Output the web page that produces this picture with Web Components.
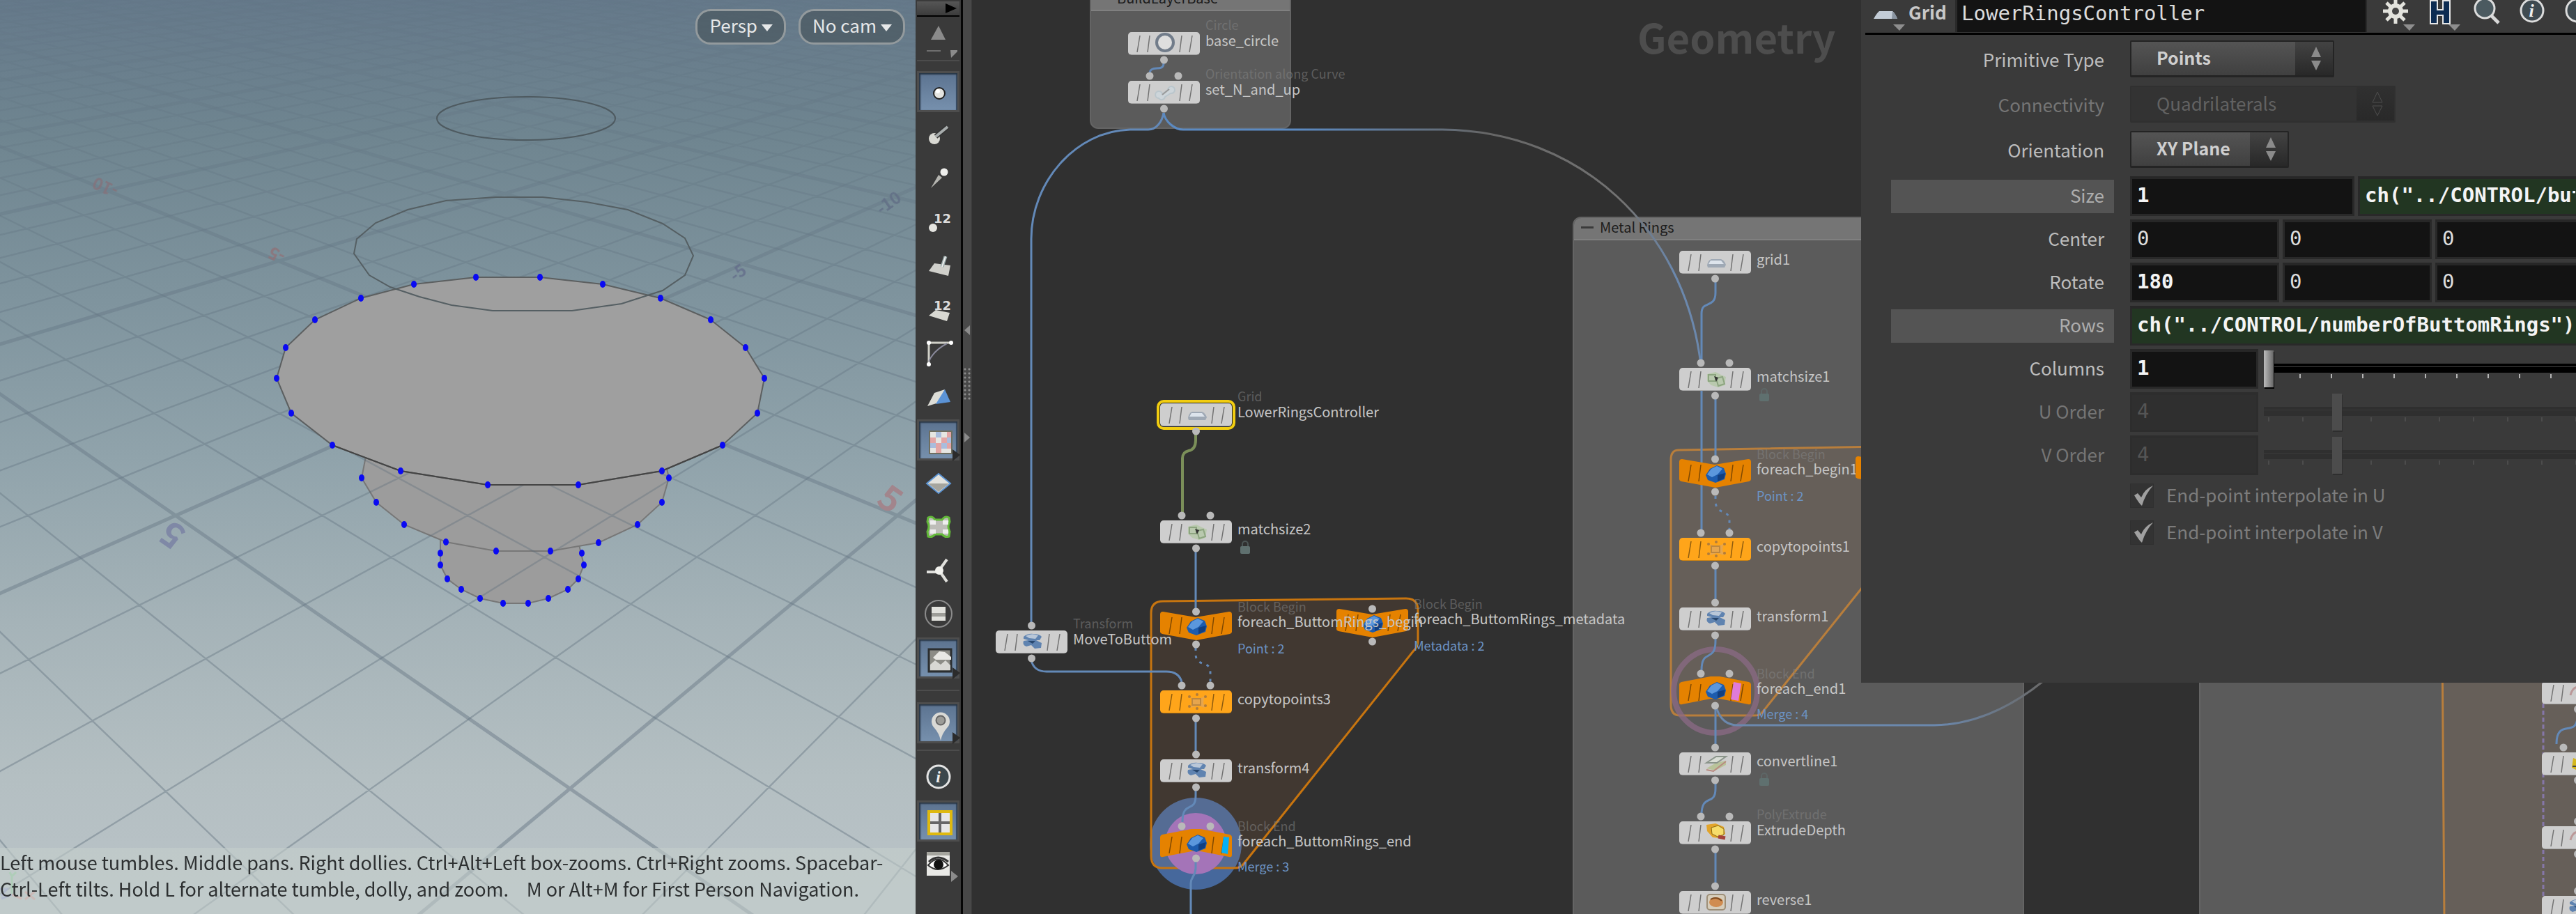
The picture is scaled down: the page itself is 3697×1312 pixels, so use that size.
<!DOCTYPE html>
<html lang="en">
<head>
<meta charset="utf-8">
<title>LowerRingsController</title>
<style>
html,body{margin:0;height:100%;background:#303030}
body{font-family:"Noto Sans CJK SC","Open Sans",sans-serif;font-size:26px;color:#c8c8c8;overflow:hidden}
</style>
</head>
<body>
<app-shell>
  <scene-view slot="scene"></scene-view>
  <tool-strip slot="tools"></tool-strip>
  <pane-splitter slot="split"></pane-splitter>
  <network-view slot="network"><param-pane></param-pane></network-view>
</app-shell>
<script>
const define=(name,css,html,after)=>customElements.define(name,class extends HTMLElement{
  connectedCallback(){
    if(this.shadowRoot)return;
    const r=this.attachShadow({mode:'open'});
    r.innerHTML='<style>*{box-sizing:border-box}'+css+'</style>'+(typeof html==='function'?html(this):html);
    if(after)after(this,r);
  }
});

/* ---------- 3D viewport ---------- */
/* projective map from grid units to view pixels, solved from four reference crossings */
function homography(src,dst){
  const m=[];
  src.forEach(([u,v],i)=>{const [x,y]=dst[i];
    m.push([u,v,1,0,0,0,-u*x,-v*x,x]);m.push([0,0,0,u,v,1,-u*y,-v*y,y]);});
  for(let c=0;c<8;c++){
    let p=c;for(let r=c+1;r<8;r++)if(Math.abs(m[r][c])>Math.abs(m[p][c]))p=r;
    [m[c],m[p]]=[m[p],m[c]];
    for(let r=0;r<8;r++)if(r!==c){const f=m[r][c]/m[c][c];for(let k=c;k<9;k++)m[r][k]-=f*m[c][k];}
  }
  const h=m.map((row,i)=>row[8]/row[i]);
  return (u,v)=>[h[0]*u+h[1]*v+h[2],h[3]*u+h[4]*v+h[5],h[6]*u+h[7]*v+1];
}
function gridPaths(){
  const H=homography([[-5,-5],[0,5],[5,0],[5,5]],[[724,278],[252,740],[1288,740],[818,1132]]);
  let minor='',major='';
  const seg=(a,b)=>{
    const e=0.08;
    if(a[2]<e&&b[2]<e)return'';
    const mix=(p,q)=>{const t=(e-p[2])/(q[2]-p[2]);return p.map((n,i)=>n+(q[i]-n)*t)};
    if(a[2]<e)a=mix(a,b);if(b[2]<e)b=mix(b,a);
    return 'M'+(a[0]/a[2]).toFixed(1)+' '+(a[1]/a[2]).toFixed(1)+'L'+(b[0]/b[2]).toFixed(1)+' '+(b[1]/b[2]).toFixed(1);
  };
  for(let i=-60;i<=25;i++){
    const s=seg(H(i,-60),H(i,25))+seg(H(-60,i),H(25,i));
    if(i%5===0)major+=s;else minor+=s;
  }
  return {minor,major};
}
const DISC1=[[594,408],[683,398],[775,398],[865,408],[948,428],[1020,459],[1070,499],[1097,543],[1087,593],[1037,639],[950,676],[830,696],[700,696],[575,676],[477,639],[418,593],[397,543],[410,499],[452,459],[518,428]];
const DISC2=[[519,686],[540,721],[580,753],[640,778],[712,791],[790,791],[859,779],[915,753],[950,721],[960,686]];
const DISC3=[[632,794],[632,811],[642,831],[662,846],[689,859],[722,866],[758,866],[787,859],[815,846],[830,831],[838,811],[835,794]];
define('scene-view',`
:host{display:flex;flex-direction:column;justify-content:space-between;position:relative;overflow:hidden;background:linear-gradient(#65798a,#6f8590 15%,#7f949e 33%,#90a3ab 50%,#a5b3b8 68%,#b4bfc2 85%,#bac3c8)}
svg{position:absolute;left:0;top:0;width:100%;height:100%}
.cams{display:flex;gap:18px;justify-content:flex-end;padding:13px 15px;position:relative}
button{font:inherit;line-height:30px;height:51px;color:#e6e8e9;background:rgba(70,82,88,.62);border:3px solid #939a9d;border-radius:22px;padding:0 16px 5px 17px;display:flex;align-items:center;gap:6px}
i{width:16px;height:10px;background:#e6e8e9;clip-path:polygon(0 0,100% 0,50% 100%);margin-top:8px}
.hint{position:relative;margin:0;min-height:95px;padding:2px 0 17px;font-size:27px;line-height:38px;color:#2d3031;background:rgba(196,207,203,.6);white-space:pre}
`,()=>{
  const g=gridPaths(),pts=a=>a.map(p=>p.join()).join(' ');
  const dots=[...DISC1,...DISC2,...DISC3].map(p=>`<ellipse cx="${p[0]}" cy="${p[1]}" rx="4" ry="5"/>`).join('');
  return `<svg viewBox="0 0 1314 1312" preserveAspectRatio="xMinYMin slice">
<defs><linearGradient id="f" x1="0" y1="0" x2="0" y2="1"><stop offset="0" stop-color="#333"/><stop offset=".35" stop-color="#bbb"/><stop offset="1" stop-color="#fff"/></linearGradient>
<mask id="m" maskUnits="userSpaceOnUse" x="0" y="0" width="1314" height="1312"><rect width="1314" height="1312" fill="url(#f)"/></mask></defs>
<g fill="#9c9c9c" stroke="#777" stroke-width="2"><path d="M632 770V811L642 831 662 846 689 859 722 866H758L787 859 815 846 830 831 838 811 828 770Z"/>
<path d="M526 650L519 686 540 721 580 753 640 778 712 791H790L859 779 915 753 950 721 960 686 952 650Z"/></g>
<g mask="url(#m)" fill="none" stroke="#5b6c7a"><path d="${g.minor}" stroke-width="2.4" stroke-opacity=".42"/><path d="${g.major}" stroke-width="5" stroke-opacity=".44"/></g>
<g fill="none" stroke="#4e5a60" stroke-width="2"><ellipse cx="755" cy="170" rx="128" ry="31"/></g>
<polygon points="${pts(DISC1)}" fill="#9f9f9f" stroke="#5c5f60" stroke-width="2"/>
<path d="M1037 639L950 676 830 696H700L575 676 477 639" fill="none" stroke="#444" stroke-width="2"/>
<polygon points="508,364 512,343 539,320 585,301 640,288 711,283 779,283 842,290 901,301 951,321 983,342 995,367 983,395 951,417 892,436 821,446 707,446 648,438 602,426 560,412 530,395" fill="none" stroke="#555f63" stroke-width="2"/>
<g fill="#0a0af2">${dots}</g>
<g font-weight="700" font-size="50" text-anchor="middle"><text transform="translate(247 768) rotate(215)" y="18" fill="#7f88a6">5</text><text transform="translate(1278 716) rotate(35)" y="18" fill="#a2858c">5</text></g>
<g font-size="24" text-anchor="middle" font-weight="700" opacity=".85"><text transform="translate(151 269) rotate(205)" y="9" fill="#84737c">-10</text><text transform="translate(397 366) rotate(205)" y="9" fill="#8f7379">-5</text><text transform="translate(1275 291) rotate(-35)" y="9" fill="#626f86">-10</text><text transform="translate(1059 391) rotate(-35)" y="9" fill="#66708c">-5</text></g>
</svg>
<div class="cams"><button type="button">Persp<i></i></button><button type="button">No cam<i></i></button></div>
<svg viewBox="0 0 1314 1312" preserveAspectRatio="xMinYMin slice" fill="none" stroke-width="3" opacity=".7"><path d="M17 1284V1258l6-6M17 1258l-3-6" stroke="#7ed08a"/><path d="M17 1284l14 6M36 1280l14 11M50 1280l-14 11" stroke="#e08a86"/><path d="M17 1284L2 1290M0 1276h10l-8 10" stroke="#8d93d8"/></svg>
<p class="hint">Left mouse tumbles. Middle pans. Right dollies. Ctrl+Alt+Left box-zooms. Ctrl+Right zooms. Spacebar-
Ctrl-Left tilts. Hold L for alternate tumble, dolly, and zoom. \u2002 M or Alt+M for First Person Navigation.</p>`;
});

/* ---------- display toolbar ---------- */
const TOOL={
point:'<circle cx="29" cy="29" r="8" fill="#e4e4e0" stroke="#222" stroke-width="2"/><circle cx="27" cy="26" r="3" fill="#fff"/>',
normal:'<circle cx="24" cy="34" r="8" fill="#d8d8d2"/><path d="M26 31L43 17" stroke="#333" stroke-width="7"/><path d="M26 31L43 17" stroke="#a8adad" stroke-width="4"/>',
spike:'<path d="M19 43L30 24l5 4z" fill="#b5b5b0"/><circle cx="38" cy="20" r="5.500" fill="#efefec"/>',
num:'<circle cx="22" cy="37" r="6" fill="#e4e4e0"/>',
prim:'<path d="M16 37L24 26 47 29 44 44z" fill="#cfcfca"/><path d="M35 31L40 16" stroke="#9aa" stroke-width="5"/><path d="M35 31L40 16" stroke="#eee" stroke-width="2"/>',
primnum:'<path d="M16 38L26 30 46 34 42 46z" fill="#d8d8d2"/>',
hull:'<path d="M16 45V15H48" fill="none" stroke="#d0d0c8" stroke-width="3"/><path d="M16 42Q22 27 42 16" fill="none" stroke="#889" stroke-width="2"/><circle cx="16" cy="15" r="3" fill="#fff"/><circle cx="48" cy="15" r="3" fill="#fff"/><circle cx="16" cy="46" r="3" fill="#fff"/>',
faces:'<path d="M14 43L24 24 39 19 30 38z" fill="#dcdcd6"/><path d="M39 19L47 37 26 40z" fill="#5b93d6"/>',
check:'<g><rect x="15" y="14" width="32" height="32" fill="#e6e6e2" stroke="#6e6e60" stroke-width="2"/><path d="M16 23h8v8h-8zM32 23h8v8h-8zM24 31h8v8h-8zM40 31h6v8h-6zM24 15h0z" fill="#e3a5a5"/><path d="M40 15h6v8h-6zM24 39h8v6h-8z" fill="#e3a5a5"/><path d="M24 15h8v8h-8zM16 31h8v7h-8zM40 23h6v8h-6zM32 31h8v8h-8z" fill="#a9bddd"/></g><path d="M48 40L59 48 48 57z" fill="#2b2b2b"/>',
diamond:'<path d="M30 15L47 29 30 43 13 29z" fill="#e3e3de" stroke="#5d94d2" stroke-width="2"/><path d="M15 29h30L30 41z" fill="#a5a59e"/>',
patch:'<path d="M15 16q6-3 10 3h10q4-6 10-3l1 6q-4 7 0 14l-1 7q-6 2-10-3H25q-4 5-10 3l-1-7q4-7 0-14z" fill="#bdbdb8" stroke="#63b93a" stroke-width="3"/><path d="M18 20h8v6h-8zM36 20h8v6h-8zM18 33h8v6h-8zM36 33h8v6h-8z" fill="#eee"/>',
axis:'<path d="M13 31h15M32 27L42 13M33 32L42 45" stroke="#e0e0dc" stroke-width="4"/><circle cx="31" cy="29" r="6" fill="#f2f2ee"/>',
slate:'<circle cx="30" cy="29" r="19" fill="none" stroke="#8b8b8b" stroke-width="2"/><path d="M20 19h20v20H20z" fill="#e2e2dd"/><path d="M20 28h20v5H20z" fill="#9d9d98"/>',
image:'<rect x="14" y="14" width="32" height="32" fill="#8c8c86" stroke="#2b2e30" stroke-width="3"/><path d="M16 44V36l7-6 8 6 7-6 7 7v7z" fill="#d8d8d4"/><path d="M20 26l9-9 8 1 9 7v4H24z" fill="#e8e8e4"/><path d="M48 40L59 48 48 57z" fill="#2b2b2b"/>',
pin:'<path d="M31 52Q29 42 22 34a13 13 0 1 1 18 0q-7 8-9 18z" fill="#d9d9d5"/><circle cx="31" cy="23" r="6.500" fill="#9b9b97" stroke="#666" stroke-width="2"/><path d="M48 40L59 48 48 57z" fill="#2b2b2b"/>',
info:'<circle cx="30" cy="29" r="16" fill="#3c474c" stroke="#e4e4e4" stroke-width="3"/>',
quad:'<rect x="14" y="13" width="32" height="32" fill="#e6e6e6" stroke="#dfb90e" stroke-width="4"/><path d="M30 15v28M16 29h28" stroke="#666" stroke-width="4"/>',
eye:'<path d="M13 12h33v34H13z" fill="#e9e9e6"/><path d="M13 12h33v5H13z" fill="#a5a59e"/><path d="M15 31Q29 14 44 31 29 43 15 31z" fill="#fff" stroke="#333" stroke-width="2"/><circle cx="30" cy="30" r="7" fill="#111"/><path d="M16 26Q29 14 44 26" fill="none" stroke="#333" stroke-width="3"/><path d="M48 39L58 47 48 55z" fill="#8b8b8b"/>'
};
define('tool-button',`
:host{display:block;height:59px}
button{display:grid;place-items:center;position:relative;width:100%;height:100%;padding:0;border:0;background:none;font:700 18px "DejaVu Sans",sans-serif;color:#dcdcdc}
svg{width:60px;height:59px}
:host([on]) button{border:3px solid #4d4d4d;background:linear-gradient(#5c7390,#7690ad);box-shadow:inset 2px 2px 2px #283646,inset -2px 0 1px #33465c}
svg,b{grid-area:1/1}
b{position:relative;padding:0 0 12px 12px}
b.i{padding:0;font:italic 700 24px "Liberation Serif",serif;color:#eee}
`,e=>{const k=e.getAttribute('icon');return `<button type="button" aria-label="${k}"><svg viewBox="0 0 60 59">${TOOL[k]}</svg>${/num/.test(k)?'<b>12</b>':k==='info'?'<b class="i">i</b>':''}</button>`});
define('tool-strip',`
:host{display:flex;flex-direction:column;background:#3a3a3a;border-right:3px solid #060606;padding:2px 2px 0}
.top{height:22px;border:0;border-bottom:2px solid #000;background:linear-gradient(#565656,#3c3c3c);padding:0 4px;display:flex;justify-content:flex-end;align-items:center}
.top svg{width:16px;height:14px}
.up{height:64px;border-bottom:2px solid #4c4c4c}
.up svg{width:61px;height:62px}
.group{display:flex;flex-direction:column;justify-content:space-between}
.a{height:872px;margin-top:14px}
hr{border:0;border-top:2px solid #4c4c4c;width:100%;margin:16px 0}
hr.n{margin:9px 0 8px}
.b{height:184px}
`,`<button class="top" type="button" aria-label="expand"><svg viewBox="0 0 16 14"><path d="M0 0L16 7 0 14z" fill="#000"/></svg></button>
<div class="up"><svg viewBox="0 0 61 62"><path d="M31 13L41 33H20z" fill="#8b8b8b"/><path d="M14 49h20" stroke="#6f6f6f" stroke-width="2"/><path d="M48 48h10v2l-9 9z" fill="#8b8b8b"/></svg></div>
<div class="group a">${['point','normal','spike','num','prim','primnum','hull','faces','check','diamond','patch','axis','slate','image'].map(k=>`<tool-button icon="${k}" ${/point|check|image/.test(k)?'on':''}></tool-button>`).join('')}</div>
<hr><tool-button icon="pin" on></tool-button><hr class="n">
<div class="group b"><tool-button icon="info"></tool-button><tool-button icon="quad" on></tool-button><tool-button icon="eye"></tool-button></div>`);

define('pane-splitter',`
:host{display:flex;flex-direction:column;align-items:center;gap:46px;padding-top:467px;background:#484848;border-right:1px solid #3a3a3a}
i{width:8px;height:14px;background:#8b8b8b;clip-path:polygon(100% 0,100% 100%,0 50%)}
i:last-child{clip-path:polygon(0 0,0 100%,100% 50%)}
span{width:12px;height:48px;background:radial-gradient(circle,#8b8b8b 0 1px,transparent 2px) 0 0/6px 6px}
`,`<i></i><span></span><i></i>`);

define('app-shell',`
:host{display:grid;grid-template-columns:1314fr 68px 13px 2302fr;grid-template-rows:minmax(0,1fr);height:100vh}
::slotted(*){min-width:0}
`,`<slot name="scene"></slot><slot name="tools"></slot><slot name="split"></slot><slot name="network"></slot>`);

/* ---------- network editor ---------- */
const GLYPH={
circle:'<ellipse cx="53" cy="15" rx="12" ry="12" fill="#dedede" stroke="#717c8a" stroke-width="4"/>',
curve:'<path d="M44 25a5 5 0 1 1 5-6l8-6a5 5 0 1 1 4 5l-8 5a5 5 0 0 1-9 2z" fill="#cdd5da" stroke="#bac6cc" stroke-width="2"/><path d="M49 20l10-8" stroke="#999" stroke-width="2"/>',
grid:'<path d="M40 21Q41 14 46 12H60Q65 14 67 20L65 24H41z" fill="#9fa9b5"/><path d="M45 14h15l4 5H42z" fill="#dde4ec"/>',
match:'<path d="M40 9l12-3 8 4 7 3-2 12-9 3-10-3-6-6z" fill="#b9c9ae"/><path d="M42 10h10v9H42zM53 15l9-2 3 10-9 3z" fill="none" stroke="#8da580" stroke-width="2"/><path d="M50 12l6 2-3 6z" fill="#333"/>',
block:'<path d="M38 18L44 9 54 4 64 8 67 16 65 24 52 29 41 25z" fill="#1d5cae"/><path d="M40 17L46 9 54 5 62 9 55 17 47 21z" fill="#5b97dd"/><path d="M55 18l11-3-2 8-9 4z" fill="#123f80"/>',
xform:'<path d="M40 9q6-5 14-4 9 0 12 4l-3 5h-5l8 4-1 7-9 1-5-5-7 2q-6-2-4-8l7-1-7-2z" fill="#5f83b0"/><path d="M43 8q8-5 18-1l-4 5-9-1z" fill="#b9c7d8"/><path d="M46 15h11l-4 4z" fill="#28486f"/>',
copy:'<path d="M44 9l9 4 10-4-1 9 2 7-9-3-11 3 3-8z" fill="#e0a55a" opacity=".8"/><g fill="#b07c3c"><circle cx="42" cy="9" r="2"/><circle cx="53" cy="6" r="2"/><circle cx="65" cy="9" r="2"/><circle cx="42" cy="23" r="2"/><circle cx="53" cy="26" r="2"/><circle cx="65" cy="22" r="2"/></g><path d="M46 12h12v9H46z" fill="none" stroke="#bd873f" stroke-width="2"/>',
line:'<path d="M39 23l14-8 14-3v6L52 26z" fill="#b9c39a"/><path d="M39 25l10 2 18-14" fill="none" stroke="#b98a80" stroke-width="2"/><path d="M39 15l14-9h14L54 15z" fill="#d9ddd5" stroke="#8a948a" stroke-width="2"/>',
extrude:'<path d="M39 5L52 3l12 5 2 10-8 6-10-1-8-9z" fill="#e2a42a"/><path d="M46 9l10-3 8 5v8l-9 3-8-4z" fill="#f6dd6b" stroke="#8a6a14" stroke-width="1"/><path d="M56 22l10 2" stroke="#a4423a" stroke-width="5"/>',
reverse:'<rect x="40" y="5" width="26" height="22" rx="4" fill="#d6cdbb" stroke="#9d8f78" stroke-width="2"/><ellipse cx="53" cy="16" rx="10" ry="7" fill="#d08c50"/><path d="M45 12q8-5 16 2" fill="none" stroke="#7d4a20" stroke-width="2"/>',
poly:'<path d="M45 8l9 4-3 14-8-4z" fill="#d4b71d"/><path d="M44 20h9" stroke="#444" stroke-width="2"/>',
red:'<path d="M41 20q3-12 12-12" fill="none" stroke="#b99" stroke-width="3"/>'
};
const dot=(x,y)=>`<circle cx="${x}" cy="${y}" r="5.500" fill="#b9b9b9"/>`;
define('net-node',`
:host{position:absolute;width:103px;height:33px;line-height:24px;font-size:20px;color:#c6c6c6;white-space:nowrap}
svg{display:block;width:103px;height:33px;overflow:visible}
.t{position:absolute;left:111px}
.type{top:-22px;font-size:18px;line-height:22px;color:rgba(132,132,132,.55)}
.name{top:0}
.info{top:38px;font-size:18px;line-height:22px;color:#6c93c4}
:host([shape]) .name{top:-1px}
:host([shape=end]) .info{top:36px}
`,e=>{
  const a=n=>e.getAttribute(n),k=a('shape')||'box',c=a('tone')||'#cecece',inn=+a('inputs'),out=a('out')!==null;
  const up=k==='begin'?-3:k==='end'?-10:-7, dn=k==='begin'?44:k==='end'?36:40;
  let s='';
  if(a('selected')!==null)s+='<rect x="-3" y="-3" width="109" height="39" rx="8" fill="#222" stroke="#f2cd10" stroke-width="4"/>';
  const body={box:'<rect width="103" height="33" rx="5"/><path d="M3 32.500h97" stroke="#000" stroke-opacity=".2" stroke-width="1"/>',
    begin:'<path d="M4-3L51 5 99-3Q103-3 103 1V26Q103 28 100 29L52 38 3 29Q0 28 0 26V1Q0-3 4-3z"/>',
    end:'<path d="M3 2L45-6H58L100 2Q103 3 103 6V31Q103 35 99 34L58 26H45L4 34Q0 35 0 31V6Q0 3 3 2z"/>'}[k];
  s+=`<g fill="${c}">${body}</g><path d="M17 5L13 29M31 5L28 29M77 5L74 29M92 5L88 29" stroke="#000" stroke-opacity=".45" stroke-width="1.500"/>`;
  if(a('flag'))s+=`<path d="${a('flagd')}" fill="${a('flag')}"/>`;
  s+=`<g transform="translate(0 ${k==='begin'?2:k==='end'?-2:0})">${GLYPH[a('icon')]}</g>`;
  if(inn===1)s+=dot(51.5,up);if(inn===2)s+=dot(31,up)+dot(72,up);if(out)s+=dot(51.5,dn);
  if(a('lock')!==null)s+='<rect x="115" y="37" width="14" height="11" rx="2" fill="#5f706f"/><path d="M118 37v-3a4 4 0 0 1 8 0v3" fill="none" stroke="#5f706f" stroke-opacity=".6" stroke-width="2"/>';
  return `<svg>${s}</svg>${a('type')?`<span class="t type">${a('type')}</span>`:''}${a('name')?`<span class="t name">${a('name')}</span>`:''}${a('info')?`<span class="t info">${a('info')}</span>`:''}`;
});
define('net-group',`
:host{position:absolute;background:#5b5b5b;border:2px solid #646464;border-radius:12px;overflow:hidden}
header{display:flex;align-items:center;gap:9px;height:32px;padding-left:10px;background:#757575;border-bottom:2px solid #808080;font-size:20px;line-height:24px;padding-bottom:4px;color:#1c1c1c}
i{width:18px;height:3px;background:#3a3a3a}
`,`<header><i></i><slot></slot></header>`);

const O=1395;
const NODES=[
 [1619,46,'base_circle','icon="circle" type="Circle" out'],
 [1619,116,'set_N_and_up','icon="curve" type="Orientation along Curve" inputs="2" out'],
 [1665,579,'LowerRingsController','icon="grid" type="Grid" selected out'],
 [1665,747,'matchsize2','icon="match" inputs="2" out lock'],
 [1429,905,'MoveToButtom','icon="xform" type="Transform" inputs="1" out'],
 [1918,877,'foreach_ButtomRings_metadata','icon="block" shape="begin" tone="#e58200" type="Block Begin" info="Metadata : 2" inputs="1" out'],
 [1665,881,'foreach_ButtomRings_begin','icon="block" shape="begin" tone="#e58200" type="Block Begin" info="Point : 2" inputs="1" out'],
 [1665,991,'copytopoints3','icon="copy" tone="#ffa51a" inputs="2" out'],
 [1665,1090,'transform4','icon="xform" inputs="1" out'],
 [1665,1196,'foreach_ButtomRings_end','icon="block" shape="end" tone="#e58200" type="Block End" info="Merge : 3" inputs="2" out flag="#04b0f5" flagd="M91 5L99 6 97 30 88 28z"'],
 [2410,360,'grid1','icon="grid" out'],
 [2410,528,'matchsize1','icon="match" inputs="2" out lock'],
 [2410,662,'foreach_begin1','icon="block" shape="begin" tone="#e58200" type="Block Begin" info="Point : 2" inputs="1" out'],
 [2663,658,'','icon="block" shape="begin" tone="#e58200"'],
 [2410,772,'copytopoints1','icon="copy" tone="#ffa51a" inputs="2" out'],
 [2410,872,'transform1','icon="xform" inputs="1" out'],
 [2410,977,'foreach_end1','icon="block" shape="end" tone="#e58200" type="Block End" info="Merge : 4" inputs="2" out flag="#e07bd8" flagd="M78 2L89 4 85 29 74 27z"'],
 [2410,1080,'convertline1','icon="line" inputs="1" out lock'],
 [2410,1179,'ExtrudeDepth','icon="extrude" type="PolyExtrude" inputs="2" out'],
 [2410,1279,'reverse1','icon="reverse" inputs="1" out'],
 [3648,978,'','icon="red" out'],
 [3648,1080,'','icon="poly" inputs="2" out'],
 [3648,1186,'','icon="red" inputs="1" out'],
 [3648,1286,'','icon="xform" inputs="1" out']
];
define('network-view',`
:host{display:block;position:relative;overflow:hidden;background:#303030}
.wires{position:absolute;left:0;top:0;width:2302px;height:1312px}
.context{position:absolute;left:955px;top:16px;font-weight:700;font-size:58px;line-height:72px;color:#4d4d4d}
`,()=>`<span class="context">Geometry</span>
<net-group style="left:${1564-O}px;top:-18px;width:289px;height:203px">BuildLayerBase</net-group>
<net-group style="left:${2257-O}px;top:311px;width:648px;height:1040px">Metal Rings</net-group>
<net-group style="left:${3156-O}px;top:311px;width:760px;height:1040px"></net-group>
<svg class="wires" viewBox="1395 0 2302 1312" fill="none" stroke="#6389b8" stroke-width="3">
<defs><linearGradient id="fade" gradientUnits="userSpaceOnUse" x1="1670" y1="0" x2="2441" y2="0"><stop offset=".25" stop-color="#5b8ac2"/><stop offset=".6" stop-color="#666"/><stop offset=".86" stop-color="#737373"/><stop offset=".95" stop-color="#6b88ad"/></linearGradient>
<linearGradient id="fade2" gradientUnits="userSpaceOnUse" x1="2780" y1="0" x2="2930" y2="0"><stop offset="0" stop-color="#6b88ad"/><stop offset="1" stop-color="#6a6a6a"/></linearGradient></defs>
<circle cx="1716" cy="1211" r="66" fill="#46689c" stroke="none"/>
<path d="M1669 863L2018 859Q2035 859 2035 876V921Q2035 929 2028 935L1784 1241Q1780 1246 1772 1246H1668Q1652 1246 1652 1228V880Q1652 863 1669 863z" fill="#ff9a40" fill-opacity=".085" stroke="#c8750f"/>
<path d="M2409 646L2760 640Q2780 640 2780 658V704Q2780 712 2773 718L2528 1024Q2526 1027 2518 1027H2411Q2398 1027 2398 1012V660Q2398 646 2409 646z" fill="#ff9a40" fill-opacity=".07" stroke="#b87e3c"/>
<path d="M3700 660H3503L3508 1320H3700z" fill="#ff9a40" fill-opacity=".07" stroke="#b87e3c"/>
<circle cx="1716" cy="1211" r="44" fill="#a474b8" stroke="none"/>
<circle cx="2462" cy="992" r="60" stroke="#8b6a86" stroke-opacity=".75" stroke-width="8"/>
<path d="M3650 980V1312" stroke="#8577a8" stroke-dasharray="6 4"/>
<path d="M1670 91C1670 104 1650 92 1650 106"/>
<path d="M1670 162C1668 174 1660 186 1648 186H1622C1543 188 1480 262 1480 343V893"/>
<path d="M1670 162C1672 174 1685 186 1698 186H2070C2270 188 2415 330 2440 516" stroke="url(#fade)"/>
<path d="M1716 619V632Q1716 645 1706 647 1697 649 1697 658V737" stroke="#7b8f59" stroke-width="4"/>
<path d="M1716 790V876M1716 1034V1078M2462 568V655M2462 812V860M2462 1018V1070M2462 1218V1268M2442 561V760"/>
<path d="M1480 948Q1484 964 1502 964H1674Q1692 964 1696 979"/>
<path d="M1716 930V938C1716 960 1737 945 1737 966V979M2462 712V718C2462 742 2482 728 2482 748V760" stroke-dasharray="4 7"/>
<path d="M1716 1134V1142C1716 1168 1697 1148 1697 1180M1716 1236V1246C1716 1258 1709 1258 1709 1268V1312"/>
<path d="M2462 403V420C2462 444 2442 430 2442 450V520M2462 912V920C2462 952 2442 930 2442 962M2462 1124V1132C2462 1158 2442 1138 2442 1170"/>
<path d="M2464 1018Q2472 1041 2494 1041H2776Q2855 1040 2932 978" stroke="url(#fade2)"/>
<path d="M3699 1028C3699 1060 3669 1030 3669 1068"/>
</svg>
${NODES.map(n=>`<net-node style="left:${n[0]-O}px;top:${n[1]}px" name="${n[2]}" ${n[3]}></net-node>`).join('')}
<slot></slot>`);

/* ---------- parameter pane ---------- */
define('param-row',`
:host{display:flex;align-items:center;gap:23px;height:57px;--ink:#bdbdbd}
:host([kind=menu]){height:53px;margin-bottom:7px}
:host([disabled]){--ink:#757575}
.l{flex:0 0 320px;height:48px;line-height:44px;padding-right:14px;text-align:right;color:var(--ink)}
:host([kind=menu]) .l{line-height:48px}
:host([hot]) .l{background:#545454;color:#adadad}
.f{flex:1 0 0;min-width:0;display:flex;align-items:center;gap:5px}
input[type=text]{flex:0 0 214px;height:57px;min-width:0;border:3px solid #292929;border-top:4px solid #272727;background:#131313;color:#dedede;font:29px "DejaVu Sans Mono","Liberation Mono",monospace;padding:0 7px 4px;margin:0;border-radius:0}
input.b{font-weight:700;color:#f4f4f4}
input.e{background:#223622}
.two input{flex-basis:322px}.one input{flex-basis:660px}
.slide input[type=text]{flex-basis:184px}
input:disabled{background:#2f2f2f;border-color:#2d2d2d;color:#555}
.menu{position:relative;display:flex}
select{appearance:none;height:53px;font:700 25px "Noto Sans CJK SC",sans-serif;color:#cfcfcf;padding:0 66px 4px 36px;border:2px solid #242424;border-bottom-width:3px;border-radius:2px;background:linear-gradient(#434343,#282828) right/54px 100% no-repeat,linear-gradient(#545454,#404040)}
.menu svg{position:absolute;right:18px;top:8px;width:16px;height:36px;fill:#8b8b8b}
select:disabled{opacity:1;font-weight:400;font-size:26px;color:#626262;border-color:#303030;background:linear-gradient(#303030,#292929) right/54px 100% no-repeat,#333}
select:disabled+svg{fill:none;stroke:#4e4e4e;stroke-width:1}
input[type=range]{appearance:none;flex:0 0 504px;height:57px;margin:0 0 0 3px;background:repeating-linear-gradient(90deg,#b5b5b5 0 2px,transparent 2px 45px) 51px 36px/100% 6px no-repeat,linear-gradient(#000 0 4px,#444 4px 5px,#000 5px) 0 21px/100% 13px no-repeat}
input[type=range]::-webkit-slider-thumb{appearance:none;width:14px;height:53px;border:0;background:linear-gradient(90deg,#bbb,#888 60%,#666);box-shadow:1px 2px 0 #000}
input[type=range]:disabled{background:repeating-linear-gradient(90deg,#4c4c4c 0 2px,transparent 2px 49px) 6px 36px/100% 6px no-repeat,linear-gradient(#2f2f2f 0 4px,#3a3a3a 4px 5px,#2f2f2f 5px) 0 21px/100% 13px no-repeat}
input[type=range]:disabled::-webkit-slider-thumb{background:#4c4c4c;box-shadow:1px 2px 0 #2e2e2e}
`,e=>{
  const a=n=>e.getAttribute(n),k=a('kind'),d=a('disabled')!==null?'disabled':'',lab=a('label');
  let f='';
  if(k==='menu')f=`<span class="menu"><select id="c" ${d} style="width:${a('w')}px"><option>${a('value')}</option></select><svg viewBox="0 0 16 36"><path d="M8 1L15 16H1zM1 21H15L8 35z"/></svg></span>`;
  else{
    const vs=a('value').split('|');
    f=vs.map((v,i)=>`<input type="text" ${i?`aria-label="${lab} ${i+1}"`:'id="c"'} class="${/^\*/.test(v)?'b':''} ${/ch\(/.test(v)?'e':''}" value='${v.replace('*','')}' ${d}>`).join('');
    if(k==='slide')f+=`<input type="range" aria-label="${lab} slider" ${d} ${d?'min="2" max="12" value="4"':'min="1" max="12" value="1"'}>`;
  }
  return `<label class="l" for="c">${lab}</label><div class="f ${k}">${f}</div>`;
});
define('param-check',`
:host{display:flex;align-items:center;gap:18px;height:35px;margin-left:343px;color:#7c7c7c;line-height:34px}
input{appearance:none;width:34px;height:35px;margin:0;background:#333;border:1px solid #303030}
label{padding-bottom:3px}
span{display:flex;position:relative}
svg{position:absolute;left:5px;top:3px;width:28px;height:30px;pointer-events:none}
`,`<span><input type="checkbox" id="k" checked disabled><svg viewBox="0 0 28 30"><path d="M1 14L6 11 11 17Q16 5 28 0 17 12 12 29 8 26 1 14z" fill="#a0a0a0"/></svg></span><label for="k"><slot></slot></label>`);
define('param-pane',`
:host{display:block;position:absolute;right:0;top:0;width:1026px;height:980px;background:#3a3a3a;overflow:hidden;font-size:26px}
header{display:flex;align-items:flex-start;height:50px;margin-left:6px;border-bottom:3px solid #000}
.logo{flex:none;width:62px;height:46px}
b{flex:none;height:46px;line-height:34px;width:67px;color:#c8c8c8}
.n{flex:none;width:591px;height:46px;border:0;border-left:3px solid #2a2a2a;border-right:2px solid #2a2a2a;background:#131313;color:#dcdcdc;font:29px "DejaVu Sans Mono","Liberation Mono",monospace;padding:0 6px 8px;margin:0}
.ic{flex:none;width:310px;height:46px}
.rows{display:flex;flex-direction:column;gap:5px;padding:8px 0 0 43px}
.checks{display:flex;flex-direction:column;gap:18px;padding-top:7px}
text{font:italic 700 26px "Liberation Serif",serif;fill:#eee;text-anchor:middle}
`,`<header>
<svg class="logo" viewBox="0 0 62 46"><path d="M12 27Q17 18 20 16H39Q43 19 46 27z" fill="#c3ccd6"/><path d="M39 16Q43 19 46 27H38z" fill="#8994a0"/><path d="M40 35h17l-8 9z" fill="#8e8e8e"/></svg>
<b>Grid</b><input class="n" type="text" aria-label="Node name" value="LowerRingsController">
<svg class="ic" viewBox="3397 0 310 46">
<g stroke="#e2e2dc" stroke-width="5"><path d="M3438-1V34M3420 16H3456M3425 4L3451 29M3451 4L3425 29"/></g><circle cx="3438" cy="16" r="11" fill="#e2e2dc"/><circle cx="3438" cy="16" r="5" fill="#444"/>
<path d="M3449 35h17l-8 9zM3514 35h17l-8 9z" fill="#8e8e8e"/>
<path d="M3488 1H3498V14H3506V1H3516V34H3506V22H3498V34H3488z" fill="#0d2c52" stroke="#e6e6e6" stroke-width="2"/>
<path d="M3574 21L3586 33" stroke="#d8d8d8" stroke-width="5"/><circle cx="3566" cy="12" r="14" fill="#4b5a60" stroke="#dcdcdc" stroke-width="3"/>
<g fill="#3f4a50" stroke="#dcdcdc" stroke-width="3"><circle cx="3634" cy="15" r="16"/><circle cx="3699" cy="15" r="16"/></g><text x="3633" y="24">i</text>
</svg></header>
<div class="rows">
<param-row kind="menu" label="Primitive Type" value="Points" w="293"></param-row>
<param-row kind="menu" label="Connectivity" value="Quadrilaterals" w="381" disabled></param-row>
<param-row kind="menu" label="Orientation" value="XY Plane" w="228"></param-row>
<param-row kind="two" label="Size" value='*1|*ch("../CONTROL/but' hot></param-row>
<param-row kind="three" label="Center" value="0|0|0"></param-row>
<param-row kind="three" label="Rotate" value="*180|0|0"></param-row>
<param-row kind="one" label="Rows" value='*ch("../CONTROL/numberOfButtomRings")' hot></param-row>
<param-row kind="slide" label="Columns" value="*1"></param-row>
<param-row kind="slide" label="U Order" value="4" disabled></param-row>
<param-row kind="slide" label="V Order" value="4" disabled></param-row>
<div class="checks"><param-check>End-point interpolate in U</param-check><param-check>End-point interpolate in V</param-check></div>
</div>`);
</script>
</body>
</html>
